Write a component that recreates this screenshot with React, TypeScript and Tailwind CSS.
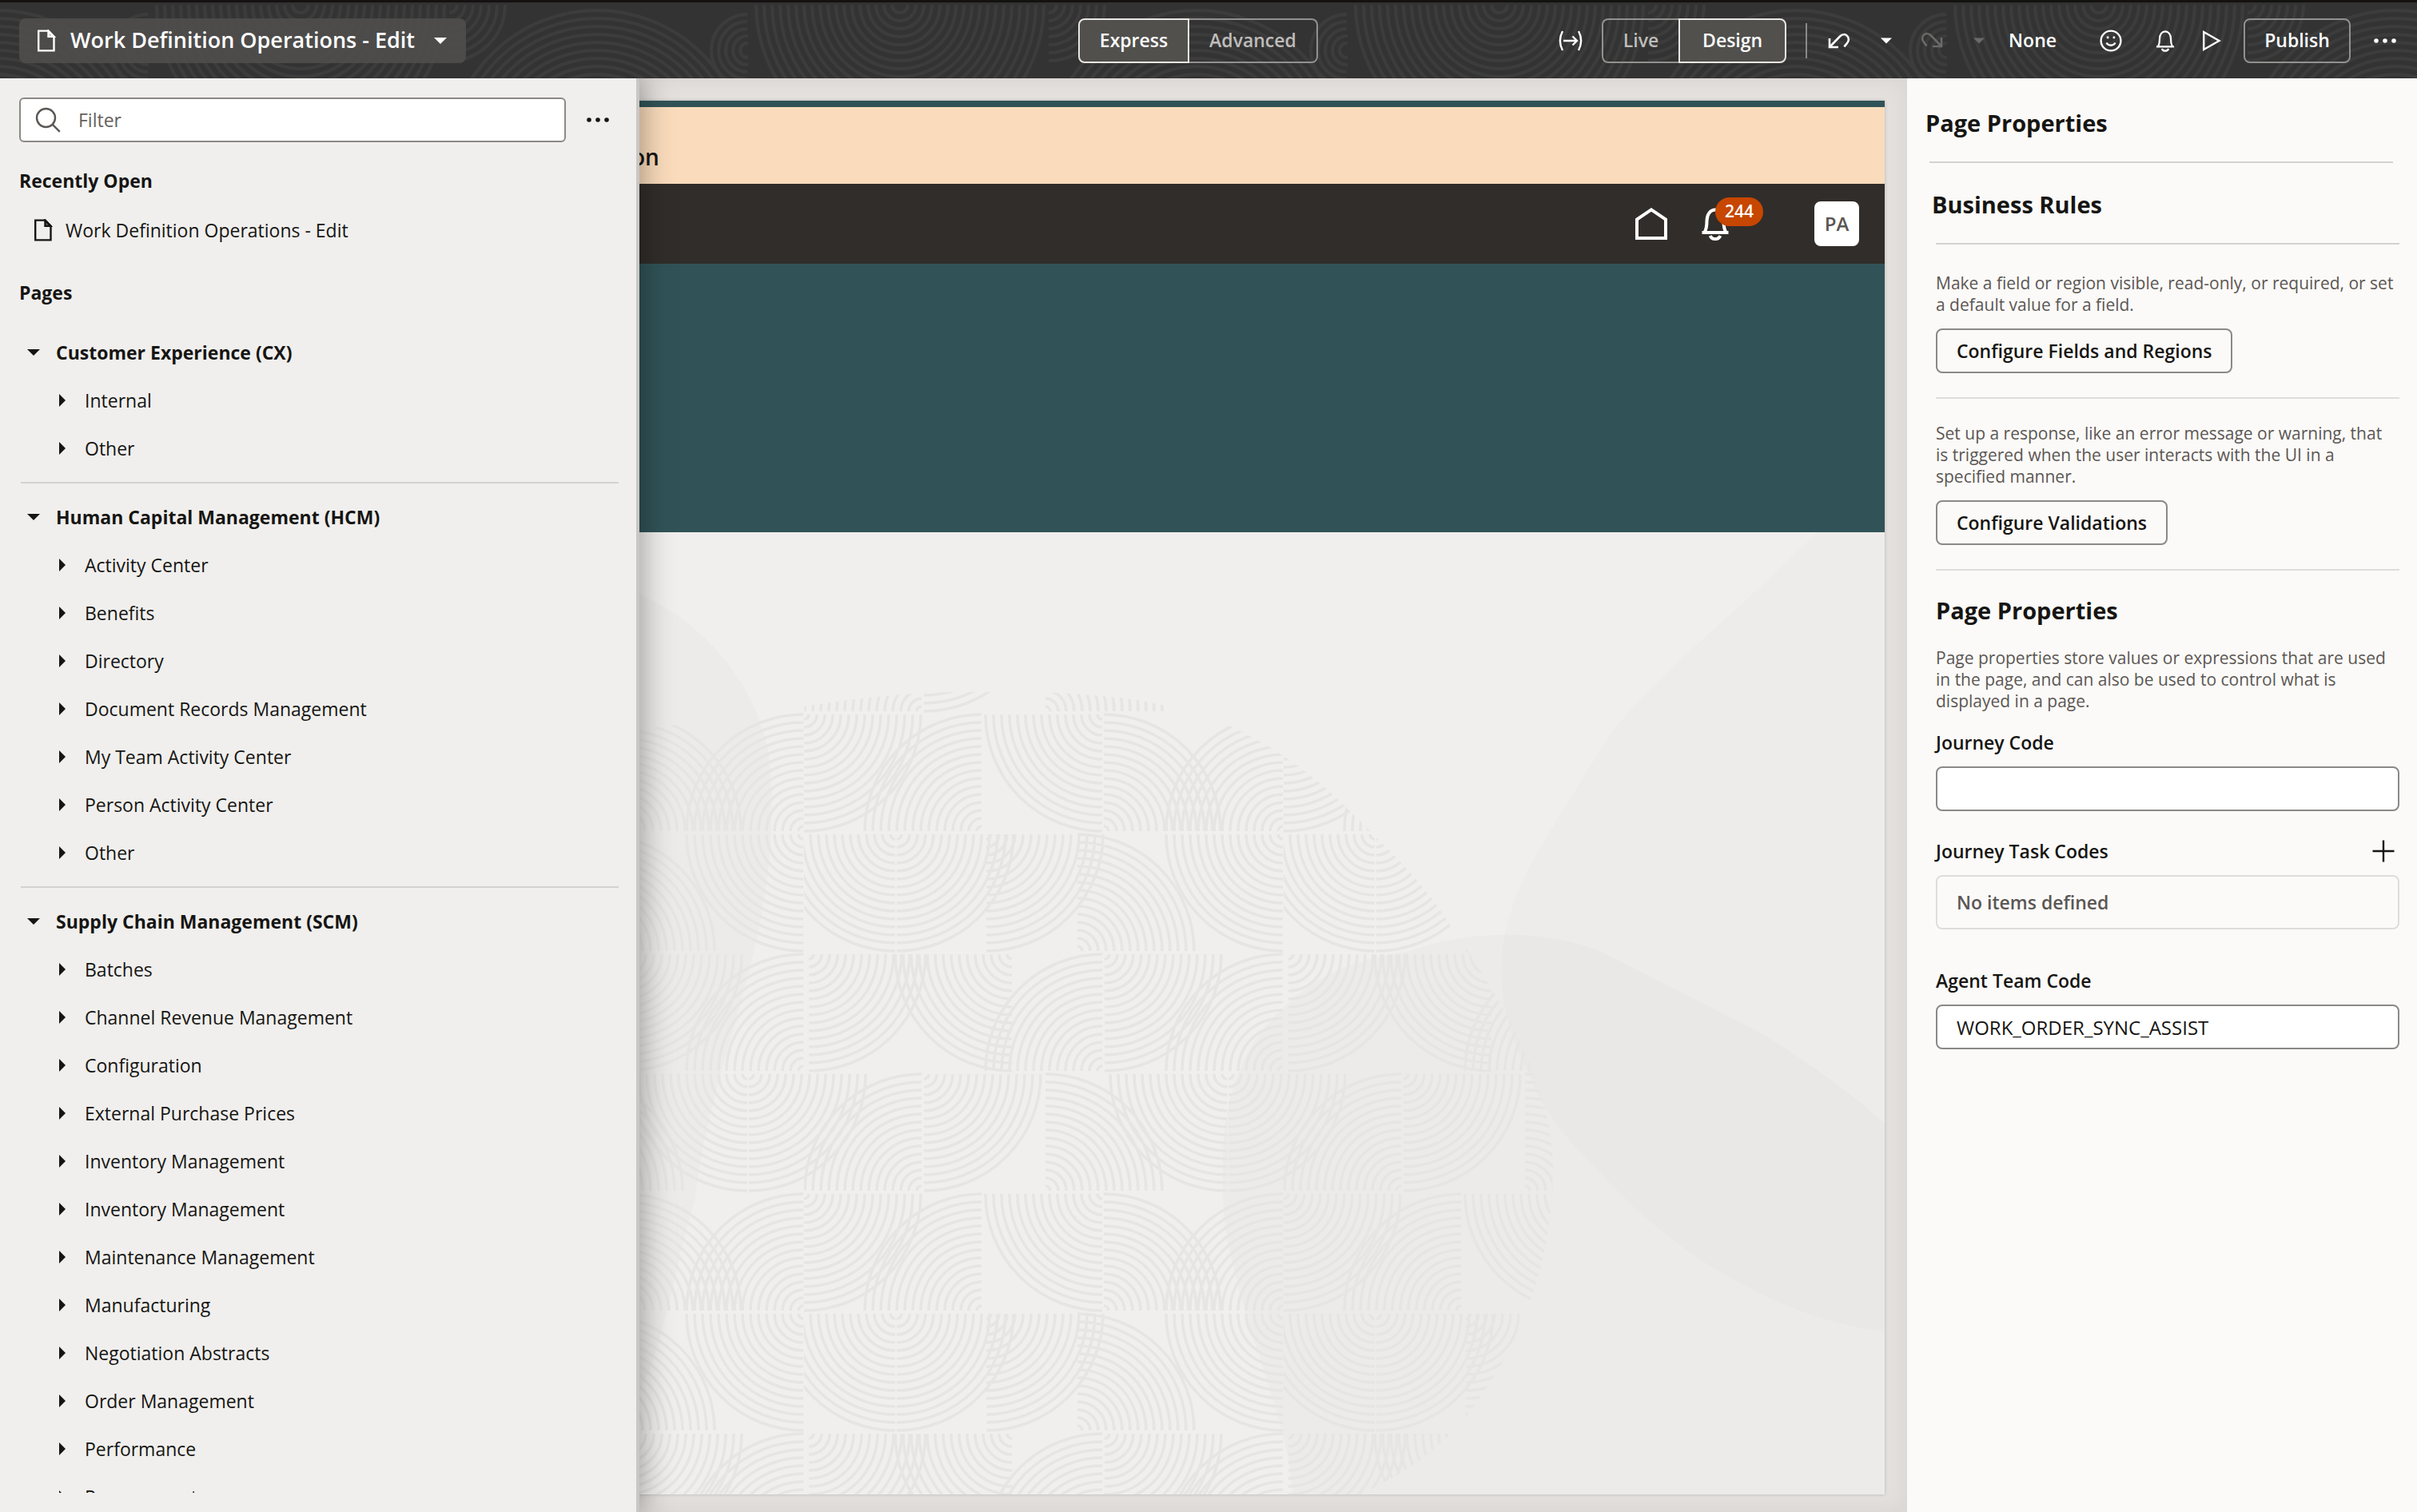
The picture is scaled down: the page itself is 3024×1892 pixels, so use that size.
import type { ReactNode } from "react";

const SECTIONS = [
  { title: "Customer Experience (CX)", items: ["Internal", "Other"] },
  {
    title: "Human Capital Management (HCM)",
    items: [
      "Activity Center",
      "Benefits",
      "Directory",
      "Document Records Management",
      "My Team Activity Center",
      "Person Activity Center",
      "Other",
    ],
  },
  {
    title: "Supply Chain Management (SCM)",
    items: [
      "Batches",
      "Channel Revenue Management",
      "Configuration",
      "External Purchase Prices",
      "Inventory Management",
      "Inventory Management",
      "Maintenance Management",
      "Manufacturing",
      "Negotiation Abstracts",
      "Order Management",
      "Performance",
      "Procurement",
    ],
  },
];

type Dir = "NE" | "NW" | "SE" | "SW";

/* Concentric quarter arcs around (cx, cy), opening towards dir. */
function arcs(cx: number, cy: number, dir: Dir, max: number, step: number, start = step) {
  const sx = dir[1] === "E" ? 1 : -1;
  const sy = dir[0] === "S" ? 1 : -1;
  const sweep = sx * sy > 0 ? 1 : 0;
  let d = "";
  for (let r = start; r <= max; r += step) {
    d += `M${cx + sx * r} ${cy}A${r} ${r} 0 0 ${sweep} ${cx} ${cy + sy * r}`;
  }
  return d;
}

const TILES: [number, number, Dir][] = [
  [0, 2, "SE"], [222, 148, "NW"], [373, 2, "SW"], [375, 148, "NE"], [599, 148, "NW"],
  [599, 152, "SW"], [114, 152, "SW"], [116, 152, "SE"], [228, 152, "SE"], [342, 298, "NE"],
  [6, 302, "SE"], [260, 302, "SW"], [373, 448, "NW"], [376, 302, "SE"], [599, 448, "NW"],
  [529, 452, "SW"], [531, 452, "SE"], [-69, 452, "SE"], [147, 598, "NW"], [150, 452, "SE"], [302, 598, "NE"],
];

function Caret({ className, down = true }: { className?: string; down?: boolean }) {
  return (
    <svg viewBox="0 0 16 16" className={"shrink-0 fill-current " + (className ?? "")} aria-hidden="true">
      <path d={down ? "M0 4h16L8 12z" : "M4 0v16l8-8z"} />
    </svg>
  );
}

function PageIcon() {
  return (
    <svg viewBox="0 0 24 28" className="h-7 w-6 shrink-0" fill="none" stroke="currentColor" strokeWidth="2.4" aria-hidden="true">
      <path d="M2.2 1.6h12.3l7 7.2v17.6H2.2z" />
      <path d="M14.5 1.6v7.2h7z" fill="currentColor" fillOpacity=".5" />
    </svg>
  );
}

function Dots() {
  return (
    <svg viewBox="0 0 28 8" className="h-2 w-7 shrink-0 fill-current" aria-hidden="true">
      <circle cx="3" cy="4" r="2.8" />
      <circle cx="14" cy="4" r="2.8" />
      <circle cx="25" cy="4" r="2.8" />
    </svg>
  );
}

function Stroke({ children, className, width = 2.4, box = "0 0 28 28" }: { children: ReactNode; className?: string; width?: number; box?: string }) {
  return (
    <svg viewBox={box} className={"shrink-0 " + (className ?? "h-7 w-7")} fill="none" stroke="currentColor" strokeWidth={width} aria-hidden="true">
      {children}
    </svg>
  );
}

function HeaderTexture() {
  const d =
    arcs(190, 3, "SW", 186, 10) + arcs(190, 3, "SE", 186, 10) +
    arcs(561, 196, "NW", 186, 10, 96) + arcs(561, 196, "NE", 186, 10, 96) +
    arcs(376, 3, "SE", 70, 10) +
    arcs(749, 60, "SW", 48, 9) + arcs(749, 60, "NW", 48, 9) + arcs(749, 60, "NE", 20, 9) + arcs(749, 60, "SE", 20, 9);
  return (
    <svg className="absolute inset-0 h-full w-full" aria-hidden="true">
      <defs>
        <pattern id="header-texture" width="750" height="200" x="186" patternUnits="userSpaceOnUse">
          <path d={d} fill="none" stroke="#3c3c3c" strokeWidth="4" />
        </pattern>
      </defs>
      <rect width="100%" height="100%" fill="url(#header-texture)" />
    </svg>
  );
}

function CanvasArt() {
  const d = TILES.map(([x, y, dir]) => arcs(x, y, dir, 146, 10, 6)).join("");
  return (
    <svg className="absolute inset-0 h-full w-full" viewBox="800 666 1558 1204" preserveAspectRatio="xMinYMin slice" aria-hidden="true">
      <defs>
        <pattern id="rings" width="600" height="600" x="1006" y="892" patternUnits="userSpaceOnUse">
          <path d={d} fill="none" stroke="#e6e5e3" strokeWidth="3.6" />
        </pattern>
        <clipPath id="blob">
          <path d="M780 915C870 905 960 893 1006 884C1080 872 1150 866 1200 866C1340 864 1450 870 1535 907C1600 936 1650 975 1690 1016C1745 1070 1785 1110 1816 1160C1870 1240 1943 1350 1943 1462C1943 1600 1890 1700 1836 1770C1800 1815 1750 1850 1680 1880H780Z" />
        </clipPath>
      </defs>
      <path d="M780 735C880 770 965 870 965 980C975 1180 885 1340 870 1500C840 1600 830 1700 790 1760Z" fill="#000" fillOpacity=".014" />
      <path d="M2273 666C2160 780 2050 860 2004 935C1940 1040 1910 1080 1892 1135C1865 1210 1880 1280 1912 1343C1935 1400 1965 1430 2004 1470C2060 1530 2110 1570 2178 1606C2240 1640 2300 1660 2358 1666V666Z" fill="#000" fillOpacity=".01" />
      <path d="M1596 1270C1650 1215 1700 1200 1760 1191C1830 1165 1930 1160 2004 1191C2080 1230 2140 1260 2208 1295C2270 1335 2320 1370 2358 1406V1880H1617C1620 1780 1525 1600 1530 1486C1525 1400 1545 1320 1596 1270Z" fill="#000" fillOpacity=".015" />
      <rect x="780" y="840" width="1200" height="1040" fill="url(#rings)" clipPath="url(#blob)" />
    </svg>
  );
}

function Bell({ className, width }: { className: string; width: number }) {
  return (
    <Stroke className={className} width={width} box="0 0 24 28">
      <path d="M1 21.3h22M3.2 21C4.600 18.400 5 15.500 5 11.700C5 6 8 2.400 12 2.400s7 3.600 7 9.300c0 3.800.4 6.700 1.800 9.300" />
      <path d="M7.800 24c.8 1.900 2.300 2.700 4.200 2.700s3.400-.8 4.200-2.700" />
    </Stroke>
  );
}

function Header() {
  return (
    <header className="relative z-20 flex h-[98px] shrink-0 items-center border-t-[3px] border-[#131210] bg-[#333333] px-6 text-[23px] font-semibold text-white">
      <HeaderTexture />
      <div className="relative flex flex-1">
        <button type="button" className="flex h-14 items-center rounded-lg bg-[#4f4e4d]/90 px-6 pl-[22px] text-[27px]">
          <PageIcon />
          <span className="ml-[18px]">Work Definition Operations - Edit</span>
          <Caret className="ml-6 h-4 w-4" />
        </button>
      </div>
      <div className="relative mr-6 flex h-14">
        <button type="button" aria-pressed="true" className="w-[139px] rounded-l-lg border-2 border-[#e8e6e3] bg-[#51504d]">Express</button>
        <button type="button" aria-pressed="false" className="w-[161px] rounded-r-lg border-2 border-l-0 border-[#92918f] text-[#bfbdba]">Advanced</button>
      </div>
      <div className="relative flex flex-1 items-center justify-end pr-0.5">
        <button type="button" aria-label="Fit width" className="mr-6">
          <Stroke className="h-7 w-[30px]" box="0 0 30 28">
            <path d="M5 2C.8 10 .8 18 5 26M25 2c4.2 8 4.2 16 0 24M6 14h17M17.500 8.500 23 14l-5.500 5.500" />
          </Stroke>
        </button>
        <div className="flex h-14">
          <button type="button" aria-pressed="false" className="w-24 rounded-l-lg border-2 border-r-0 border-[#92918f] text-[#bfbdba]">Live</button>
          <button type="button" aria-pressed="true" className="w-[135px] rounded-r-lg border-2 border-[#e8e6e3] bg-[#51504d]">Design</button>
        </div>
        <span className="ml-6 h-11 w-0.5 bg-[#8b8987]" />
        <button type="button" aria-label="Undo" className="ml-[26px]">
          <Stroke width={2.6}>
            <path d="M2 11v11h11M2.500 21.500 15 8.500c3-3 6.500-3 9-.6s2.500 6.500 0 9l-3.600 4.600" />
          </Stroke>
        </button>
        <button type="button" aria-label="Undo history" className="ml-[38px]">
          <Caret className="h-[14px] w-[14px]" />
        </button>
        <button type="button" aria-label="Redo" disabled className="ml-9 text-[#6b6a68]">
          <Stroke width={2.6}>
            <path d="M26 10v11H15M25.500 20.500 13 7.500c-3-3-6.500-3-9-.6s-2.500 6.500 0 9l3.600 4.600" />
          </Stroke>
        </button>
        <button type="button" aria-label="Redo history" disabled className="ml-[38px] text-[#6b6a68]">
          <Caret className="h-[14px] w-[14px]" />
        </button>
        <button type="button" className="ml-[30px]">None</button>
        <button type="button" aria-label="Feedback" className="ml-[54px]">
          <Stroke>
            <circle cx="14" cy="14" r="12.4" />
            <path d="M8.500 16.500c1.200 2.200 3 3.200 5.500 3.200s4.300-1 5.500-3.200" />
            <path d="M8.800 9.800h2.600M16.600 9.800h2.600" strokeWidth="2.800" />
          </Stroke>
        </button>
        <button type="button" aria-label="Notifications" className="ml-[42px]">
          <Bell className="h-7 w-6" width={2.2} />
        </button>
        <button type="button" aria-label="Preview" className="ml-[34px]">
          <Stroke className="h-7 w-6" box="0 0 24 28">
            <path d="M2.200 3v22L21.500 14z" />
          </Stroke>
        </button>
        <button type="button" className="ml-7 h-14 w-[134px] rounded-lg border-2 border-[#92918f]">Publish</button>
        <button type="button" aria-label="More actions" className="ml-[29px]">
          <Dots />
        </button>
      </div>
    </header>
  );
}

function PagesPanel() {
  return (
    <aside className="z-10 flex w-[800px] shrink-0 flex-col border-r-4 border-[#c9c7c4] bg-[#f0efed] pt-6 pb-6 shadow-[0_0_40px_rgba(0,0,0,0.4)]">
      <div className="flex h-14 shrink-0 items-center pr-[34px] pl-6">
        <div className="flex h-full flex-1 items-center rounded-md border-2 border-[#8b8987] bg-white pr-4 pl-[18px] focus-within:border-[#312d2a]">
          <Stroke className="h-8 w-8 text-[#5b5754]" width={2.4} box="0 0 32 32">
            <circle cx="13.5" cy="13.5" r="11.5" />
            <path d="m21.800 21.800 9 9" />
          </Stroke>
          <input type="text" aria-label="Filter" placeholder="Filter" className="ml-[22px] min-w-0 flex-1 bg-transparent outline-none placeholder:text-[#65605d]" />
        </div>
        <button type="button" aria-label="More options" className="ml-[26px] flex h-10 items-center">
          <Dots />
        </button>
      </div>
      <h2 className="mt-8 px-6 leading-8 font-bold">Recently Open</h2>
      <button type="button" className="mt-4 flex h-[60px] shrink-0 items-center pl-[42px]">
        <PageIcon />
        <span className="ml-4">Work Definition Operations - Edit</span>
      </button>
      <h2 className="mt-8 mb-[29px] px-6 leading-8 font-bold">Pages</h2>
      <nav aria-label="Pages" className="min-h-0 flex-1 overflow-hidden">
        {SECTIONS.map((section, i) => (
          <section key={section.title}>
            {i > 0 && <hr className="my-3 mr-[22px] ml-[26px] border-t-2 border-[#d4d2cf]" />}
            <button type="button" aria-expanded="true" className="flex h-[60px] w-full items-center pl-[34px] font-bold">
              <Caret className="h-4 w-4" />
              <span className="ml-5">{section.title}</span>
            </button>
            <ul>
              {section.items.map((item, j) => (
                <li key={j}>
                  <button type="button" aria-expanded="false" className="flex h-[60px] w-full items-center pl-[70px]">
                    <Caret down={false} className="h-4 w-4" />
                    <span className="ml-5">{item}</span>
                  </button>
                </li>
              ))}
            </ul>
          </section>
        ))}
      </nav>
    </aside>
  );
}

function Canvas() {
  return (
    <main className="flex min-w-0 flex-1 flex-col bg-[#e3e0dd] pt-7 pr-7 pb-[22px] shadow-[inset_0_0_28px_rgba(0,0,0,0.06)]">
      <div className="flex flex-1 flex-col overflow-hidden shadow-[0_0_4px_rgba(0,0,0,0.2)]">
        <div className="h-2 bg-[#315357]" />
        <div className="flex h-24 items-center bg-[#fadcbc] pt-7 text-[28px] font-semibold">
          <span className="-ml-2.5">on</span>
        </div>
        <div className="flex h-[100px] items-center justify-end bg-[#312d2a] pr-8 text-white">
          <button type="button" aria-label="Home">
            <Stroke className="h-10 w-10" width={4} box="0 0 40 40">
              <path d="M2 38V14.500L20 2.400l18 12.100V38z" />
            </Stroke>
          </button>
          <button type="button" aria-label="244 notifications" className="relative ml-[42px]">
            <Bell className="h-[42px] w-9" width={2.7} />
            <span className="absolute -top-3 left-[18px] flex h-9 w-[60px] items-center justify-center rounded-full bg-[#c74600] text-[21px] font-semibold">244</span>
          </button>
          <button type="button" className="ml-[106px] h-14 w-14 rounded-lg bg-white text-2xl font-semibold text-[#5b5754]">PA</button>
        </div>
        <div className="h-[336px] bg-[#315357]" />
        <div className="relative flex-1 overflow-hidden bg-[#f0efed]">
          <CanvasArt />
        </div>
      </div>
    </main>
  );
}

function PropertiesPanel() {
  const copy = "pr-1.5 text-[21px] leading-[27px] text-[#5b5754]";
  const button = "h-14 rounded-lg border-2 border-[#8b8987] px-6 font-semibold";
  const input = "h-14 w-full rounded-lg border-2 border-[#8b8987] bg-white px-6 text-2xl outline-none";
  const rule = "mt-[30px] border-t-2 border-[#dfdddb]";
  return (
    <aside className="z-10 w-[638px] shrink-0 bg-[#fbfaf8] pt-9 pr-[22px] pl-9">
      <div className="-mx-2">
        <h1 className="-ml-[5px] text-[29px] leading-10 font-bold">Page Properties</h1>
        <hr className="mt-7 mr-4 border-t-2 border-[#d4d2cf]" />
      </div>
      <h2 className="mt-8 -ml-[5px] text-[29px] leading-10 font-bold">Business Rules</h2>
      <hr className="mt-7 border-t-2 border-[#d4d2cf]" />
      <p className={"mt-[35px] " + copy}>Make a field or region visible, read-only, or required, or set a default value for a field.</p>
      <button type="button" className={"mt-4 " + button}>Configure Fields and Regions</button>
      <hr className={rule} />
      <p className={"mt-[30px] " + copy}>Set up a response, like an error message or warning, that is triggered when the user interacts with the UI in a specified manner.</p>
      <button type="button" className={"mt-4 " + button}>Configure Validations</button>
      <hr className={rule} />
      <h2 className="mt-[30px] text-[29px] leading-10 font-bold">Page Properties</h2>
      <p className={"mt-[26px] " + copy}>Page properties store values or expressions that are used in the page, and can also be used to control what is displayed in a page.</p>
      <label htmlFor="journey-code" className="mt-[22px] block leading-8 font-semibold">Journey Code</label>
      <input id="journey-code" type="text" className={"mt-[14px] block " + input} />
      <div className="mt-[34px] flex items-center justify-between leading-8 font-semibold">
        <h3>Journey Task Codes</h3>
        <button type="button" aria-label="Add journey task code" className="mr-1.5">
          <Stroke className="h-7 w-7" width={2.4}>
            <path d="M14 .5v27M.5 14h27" />
          </Stroke>
        </button>
      </div>
      <div className="mt-[14px] flex h-[68px] items-center rounded-lg border-2 border-[#dfdddb] px-6 font-semibold text-[#5b5754]">No items defined</div>
      <label htmlFor="agent-team-code" className="mt-12 block leading-8 font-semibold">Agent Team Code</label>
      <input id="agent-team-code" type="text" defaultValue="WORK_ORDER_SYNC_ASSIST" className={"mt-[14px] block " + input} />
    </aside>
  );
}

export default function App() {
  return (
    <div className="flex h-screen flex-col overflow-hidden bg-[#f0efed] font-['Open_Sans','Noto_Sans',sans-serif] text-[23px] text-[#161513]">
      <Header />
      <div className="flex min-h-0 flex-1">
        <PagesPanel />
        <Canvas />
        <PropertiesPanel />
      </div>
    </div>
  );
}
